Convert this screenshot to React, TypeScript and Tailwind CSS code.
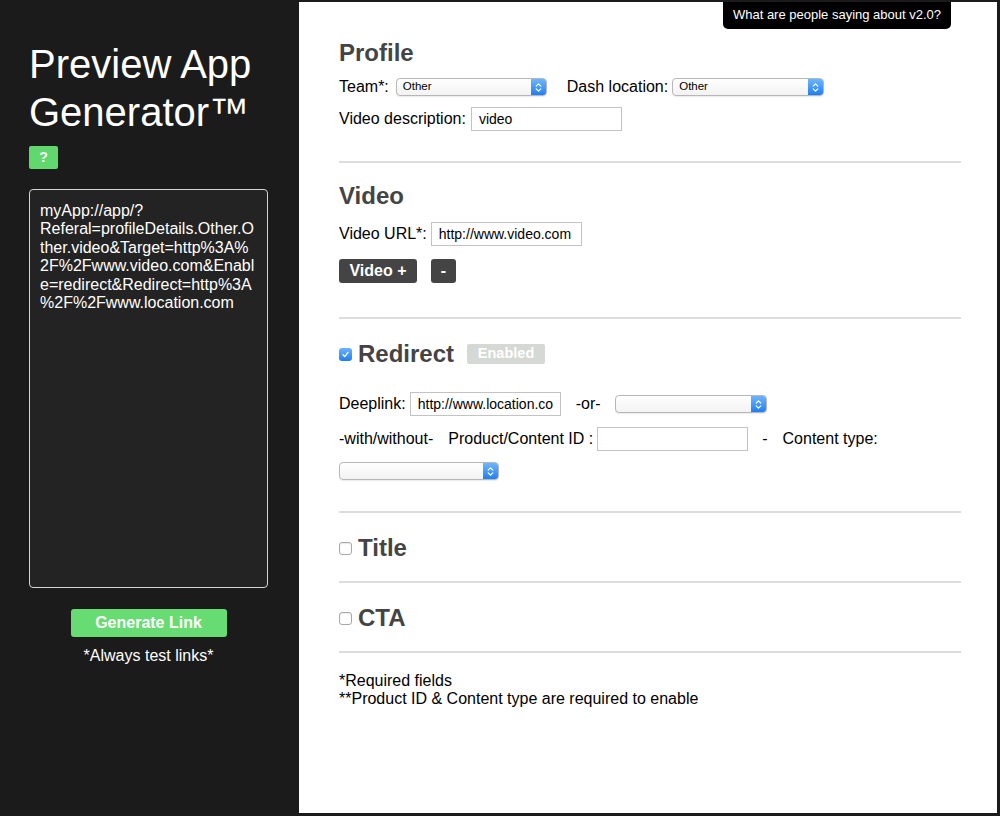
import React from "react";

const urlLines = [
	"myApp://app/?",
	"Referal=profileDetails.Other.O",
	"ther.video&Target=http%3A%",
	"2F%2Fwww.video.com&Enabl",
	"e=redirect&Redirect=http%3A",
	"%2F%2Fwww.location.com",
];

function MacSelect({ value = "", width }: { value?: string; width: string }) {
	return (
		<div
			className={`flex h-[18px] ${width} shrink-0 overflow-hidden rounded-[4px] border border-[#b7b7b7] bg-linear-to-b from-white to-[#f3f3f3] shadow-[0_1px_1px_rgba(0,0,0,0.08)]`}
		>
			<div className="flex flex-1 items-center pl-[6px] text-[11.5px] leading-none text-black">
				{value}
			</div>
			<div className="flex w-[15px] items-center justify-center bg-linear-to-b from-[#6db5fb] to-[#1d7ff6]">
				<svg width="7" height="11" viewBox="0 0 7 11" fill="none">
					<path
						d="M1.2 4.2 L3.5 1.9 L5.8 4.2 M1.2 6.8 L3.5 9.1 L5.8 6.8"
						stroke="white"
						strokeWidth="1.2"
						strokeLinecap="round"
						strokeLinejoin="round"
					/>
				</svg>
			</div>
		</div>
	);
}

function TextBox({ value, className }: { value: string; className: string }) {
	return (
		<input
			readOnly
			value={value}
			className={`h-[24px] w-[151px] shrink-0 border border-[#c3c3c3] bg-white px-[7px] text-[14px] text-black outline-none ${className}`}
		/>
	);
}

function Check({ checked }: { checked?: boolean }) {
	if (checked) {
		return (
			<span className="flex h-[13px] w-[13px] items-center justify-center rounded-[3px] bg-linear-to-b from-[#6bb3fb] to-[#1b7df5]">
				<svg width="9" height="9" viewBox="0 0 9 9" fill="none">
					<path
						d="M2 4.8 L3.8 6.6 L7 2.4"
						stroke="white"
						strokeWidth="1.3"
						strokeLinecap="round"
						strokeLinejoin="round"
					/>
				</svg>
			</span>
		);
	}
	return (
		<span className="h-[13px] w-[13px] rounded-[3px] border border-[#a8a8a8] bg-white shadow-[inset_0_1px_1px_rgba(0,0,0,0.08)]" />
	);
}

function Heading({ children }: { children: React.ReactNode }) {
	return (
		<h2 className="text-[24px] leading-[28px] font-bold text-[#444]">
			{children}
		</h2>
	);
}

function Rule({ className }: { className: string }) {
	return <div className={`h-[2px] bg-[#dcdcdc] ${className}`} />;
}

export default function App() {
	return (
		<div className="flex h-[816px] w-full bg-[#1b1b1b] font-['Liberation_Sans',Arial,sans-serif]">
			{/* sidebar */}
			<aside className="flex w-[299px] shrink-0 flex-col pt-[40px] pl-[29px]">
				<h1 className="text-[40px] leading-[48px] text-white">
					Preview App
					<br />
					Generator™
				</h1>
				<button className="mt-[10px] flex h-[23px] w-[29px] items-center justify-center rounded-[2px] bg-[#61d86e] text-[14px] font-bold text-white">
					?
				</button>
				<div className="mt-[20px] h-[399px] w-[239px] rounded-[4px] border border-[#d4d4d4] bg-[#232323] px-[10px] pt-[12px] text-[16px] leading-[18.4px] whitespace-pre text-white">
					{urlLines.map((l) => (
						<div key={l}>{l}</div>
					))}
				</div>
				<div className="flex w-[239px] flex-col items-center">
					<button className="mt-[21px] h-[28px] w-[156px] rounded-[3px] bg-[#66dc72] text-[16px] font-bold text-white">
						Generate Link
					</button>
					<p className="mt-[10px] text-[16px] leading-[18.4px] text-white">
						*Always test links*
					</p>
				</div>
			</aside>

			{/* form */}
			<main className="relative mt-[2px] mr-[3px] mb-[3px] flex-1 bg-white pt-[37px] pr-[36px] pl-[40px] text-[16px] text-black">
				<div className="absolute top-0 right-[46px] flex h-[27px] w-[228px] justify-center rounded-b-[5px] bg-black pt-[3px] text-[13px] text-white">
					What are people saying about v2.0?
				</div>

				<Heading>Profile</Heading>
				<div className="mt-[8px] flex h-[24px] items-center">
					<span>Team*:</span>
					<div className="ml-[7px]">
						<MacSelect value="Other" width="w-[151px]" />
					</div>
					<span className="ml-[20px]">Dash location:</span>
					<div className="ml-[4px]">
						<MacSelect value="Other" width="w-[152px]" />
					</div>
				</div>
				<div className="mt-[8px] flex h-[24px] items-center">
					<span>Video description:</span>
					<TextBox value="video" className="ml-[5px]" />
				</div>
				<Rule className="mt-[30px]" />

				<div className="mt-[19px]">
					<Heading>Video</Heading>
				</div>
				<div className="mt-[12px] flex h-[24px] items-center">
					<span>Video URL*:</span>
					<TextBox value="http://www.video.com" className="ml-[4px] w-[150px]" />
				</div>
				<div className="mt-[13px] flex items-center gap-[14px]">
					<button className="h-[24px] w-[78px] rounded-[3px] bg-[#444] text-[16px] font-bold text-white">
						Video +
					</button>
					<button className="h-[24px] w-[25px] rounded-[3px] bg-[#444] text-[16px] font-bold text-white">
						-
					</button>
				</div>
				<Rule className="mt-[34px]" />

				<div className="mt-[21px] flex items-center">
					<Check checked />
					<div className="ml-[6px]">
						<Heading>Redirect</Heading>
					</div>
					<span className="ml-[13px] flex h-[20px] w-[78px] items-center justify-center rounded-[2px] bg-[#d5d8d5] text-[14.5px] font-bold text-white">
						Enabled
					</span>
				</div>
				<div className="mt-[24px] flex h-[24px] items-center">
					<span>Deeplink:</span>
					<TextBox value="http://www.location.com" className="ml-[4px]" />
					<span className="ml-[15px]">-or-</span>
					<div className="ml-[14px]">
						<MacSelect width="w-[152px]" />
					</div>
				</div>
				<div className="mt-[11px] flex h-[24px] items-center">
					<span>-with/without-</span>
					<span className="ml-[15px]">Product/Content ID :</span>
					<TextBox value="" className="ml-[4px]" />
					<span className="ml-[14px]">-</span>
					<span className="ml-[15px]">Content type:</span>
				</div>
				<div className="mt-[8px] flex h-[24px] items-center">
					<MacSelect width="w-[160px]" />
				</div>
				<Rule className="mt-[28px]" />

				<div className="mt-[21px] flex items-center">
					<Check />
					<div className="ml-[6px]">
						<Heading>Title</Heading>
					</div>
				</div>
				<Rule className="mt-[19px]" />

				<div className="mt-[21px] flex items-center">
					<Check />
					<div className="ml-[6px]">
						<Heading>CTA</Heading>
					</div>
				</div>
				<Rule className="mt-[19px]" />

				<div className="mt-[19px] text-[16px] leading-[18px]">
					<p>*Required fields</p>
					<p>**Product ID &amp; Content type are required to enable</p>
				</div>
			</main>
		</div>
	);
}
